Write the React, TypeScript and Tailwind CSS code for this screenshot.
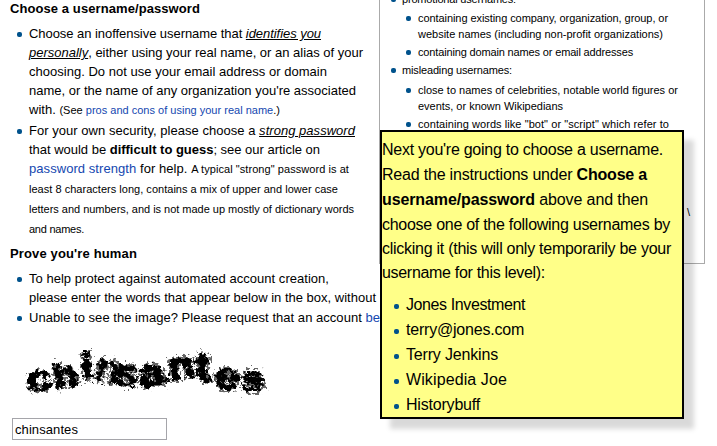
import { useLayoutEffect, useRef, useState, type ReactNode } from "react";

type LineProps = { width: number; className: string; children: ReactNode };

/* One line of text, tracked evenly so that it fills its measure. */
function Line({ width, className, children }: LineProps) {
  const ref = useRef<HTMLSpanElement>(null);
  const [spacing, setSpacing] = useState(0);
  useLayoutEffect(() => {
    const el = ref.current;
    if (!el) return;
    const count = (el.textContent ?? "").length;
    setSpacing((width - el.getBoundingClientRect().width) / count);
  }, [width]);
  return (
    <div className={`flex items-center whitespace-pre ${className}`}>
      <span ref={ref} style={{ letterSpacing: `${spacing}px` }}>
        {children}
      </span>
    </div>
  );
}

function Item({ dot, children }: { dot: string; children: ReactNode }) {
  return (
    <li className="flex items-start">
      <span className={`size-[5px] shrink-0 rounded-[2px] bg-[#00528c] ${dot}`} />
      <div>{children}</div>
    </li>
  );
}

const blue = "text-[#1447b0]";

const letters = [
  { c: "c", x: 28, y: 392, r: -6, s: 36, w: 1.25 },
  { c: "h", x: 56, y: 389, r: -12, s: 34, w: 1.15 },
  { c: "i", x: 82, y: 380, r: -3, s: 38, w: 1.1 },
  { c: "n", x: 94, y: 379, r: 12, s: 39, w: 1.0 },
  { c: "s", x: 115, y: 384, r: 6, s: 36, w: 1.1 },
  { c: "a", x: 141, y: 388, r: -12, s: 37, w: 1.3 },
  { c: "n", x: 170, y: 380, r: -7, s: 38, w: 1.1 },
  { c: "t", x: 196, y: 382, r: -3, s: 42, w: 1.1 },
  { c: "e", x: 213, y: 387, r: 8, s: 37, w: 1.2 },
  { c: "s", x: 242, y: 392, r: -5, s: 37, w: 1.15 },
];

function CaptchaWord({ stroke }: { stroke: number }) {
  return (
    <>
      {letters.map((l, i) => (
        <text key={i} transform={`translate(${l.x} ${l.y}) rotate(${l.r}) scale(${l.w} 1)`} fontSize={l.s} strokeWidth={stroke}>
          {l.c}
        </text>
      ))}
    </>
  );
}

function Captcha() {
  return (
    <svg viewBox="20 340 260 62" className="block h-[62px] w-[260px] font-['Liberation_Sans',Arial,sans-serif] font-bold">
      <defs>
        <filter id="rough" x="-5%" y="-20%" width="110%" height="140%" colorInterpolationFilters="sRGB">
          <feTurbulence type="fractalNoise" baseFrequency="0.22" numOctaves="2" seed="4" result="noise" />
          <feDisplacementMap in="SourceGraphic" in2="noise" scale="12" xChannelSelector="R" yChannelSelector="G" />
          <feGaussianBlur stdDeviation="0.5" />
        </filter>
        <filter id="fringe" x="-5%" y="-20%" width="110%" height="140%" colorInterpolationFilters="sRGB">
          <feTurbulence type="fractalNoise" baseFrequency="0.3" numOctaves="2" seed="9" result="noise" />
          <feDisplacementMap in="SourceGraphic" in2="noise" scale="20" xChannelSelector="R" yChannelSelector="G" />
          <feGaussianBlur stdDeviation="0.6" />
        </filter>
      </defs>
      <g filter="url(#fringe)" className="fill-black stroke-black opacity-60">
        <CaptchaWord stroke={2} />
      </g>
      <g filter="url(#rough)" className="fill-black stroke-black">
        <CaptchaWord stroke={1.2} />
      </g>
    </svg>
  );
}

function Instructions() {
  return (
    <main className="w-[379px] shrink-0 pl-[10px] text-[13px]">
      <Line width={190} className="h-[17px] font-bold">Choose a username/password</Line>
      <ul className="mt-[7px] pl-[7px]">
        <Item dot="mt-[8px] mr-[7px]">
          <Line width={292} className="h-[19px]">Choose an inoffensive username that <i className="underline">identifies you</i></Line>
          <Line width={334} className="h-[19px]"><i className="underline">personally</i>, either using your real name, or an alias of your</Line>
          <Line width={298} className="h-[19px]">choosing. Do not use your email address or domain</Line>
          <Line width={327} className="h-[19px]">name, or the name of any organization you're associated</Line>
          <Line width={251} className="h-[19px]">with. <span className="text-[11px]">(See <span className={blue}>pros and cons of using your real name</span>.)</span></Line>
        </Item>
        <Item dot="mt-[10px] mr-[7px]">
          <Line width={326} className="mt-[2px] h-[19px]">For your own security, please choose a <i className="underline">strong password</i></Line>
          <Line width={291} className="h-[19px]">that would be <b>difficult to guess</b>; see our article on</Line>
          <Line width={320} className="h-[19px]"><span className={blue}>password strength</span> for help. <span className="text-[11px]">A typical "strong" password is at</span></Line>
          <Line width={309} className="mt-px h-[20px] text-[11px]">least 8 characters long, contains a mix of upper and lower case</Line>
          <Line width={325} className="h-[20px] text-[11px]">letters and numbers, and is not made up mostly of dictionary words</Line>
          <Line width={55} className="h-[20px] text-[11px]">and names.</Line>
        </Item>
      </ul>
      <Line width={127} className="mt-[5px] h-[19px] font-bold">Prove you're human</Line>
      <ul className="mt-[6px] pl-[7px]">
        <Item dot="mt-[8px] mr-[7px]">
          <Line width={300} className="h-[19px]">To help protect against automated account creation,</Line>
          <Line width={347} className="h-[19px]">please enter the words that appear below in the box, without</Line>
        </Item>
        <Item dot="mt-[9px] mr-[7px]">
          <Line width={351} className="mt-px h-[19px]">Unable to see the image? Please request that an account <span className={blue}>be</span></Line>
        </Item>
      </ul>
      <div className="mt-[13px] ml-[10px]"><Captcha /></div>
      <div className="mt-[16px] ml-[2px] h-[22px] w-[155px] border border-[#a5a5aa] pl-[2px]">
        <Line width={63} className="h-[20px]">chinsantes</Line>
      </div>
    </main>
  );
}

function Guidelines() {
  return (
    <aside className="h-[264px] w-[326px] shrink-0 overflow-hidden border-x border-b border-[#aaa] pl-[11px] text-[11px]">
      <ul className="-mt-[9px]">
        <Item dot="mt-[6px] mr-[6px]">
          <Line width={114} className="h-[16px]">promotional usernames:</Line>
          <ul className="mt-[3px] pl-[4px]">
            <Item dot="mt-[6px] mr-[7px]">
              <Line width={250} className="h-[16px]">containing existing company, organization, group, or</Line>
              <Line width={245} className="h-[16px]">website names (including non-profit organizations)</Line>
            </Item>
            <Item dot="mt-[8px] mr-[7px]">
              <Line width={215} className="mt-[2px] h-[16px]">containing domain names or email addresses</Line>
            </Item>
          </ul>
        </Item>
        <Item dot="mt-[8px] mr-[6px]">
          <Line width={110} className="mt-[2px] h-[16px]">misleading usernames:</Line>
          <ul className="mt-[4px] pl-[4px]">
            <Item dot="mt-[6px] mr-[7px]">
              <Line width={260} className="h-[16px]">close to names of celebrities, notable world figures or</Line>
              <Line width={145} className="h-[16px]">events, or known Wikipedians</Line>
            </Item>
            <Item dot="mt-[8px] mr-[7px]">
              <Line width={251} className="mt-[2px] h-[16px]">containing words like "bot" or "script" which refer to</Line>
            </Item>
          </ul>
        </Item>
      </ul>
      <div className="mt-[75px] ml-[296px] text-[11px]">\</div>
    </aside>
  );
}

const names: [string, number][] = [
  ["Jones Investment", 119],
  ["terry@jones.com", 118],
  ["Terry Jenkins", 92],
  ["Wikipedia Joe", 101],
  ["Historybuff", 74],
];

function Tutorial() {
  return (
    <section className="absolute top-[130px] left-[380px] h-[289px] w-[304px] border-2 border-black bg-[#ffff88] pt-[6px] text-[16px] shadow-[10px_10px_5px_rgba(0,0,0,0.15)]">
      <Line width={281} className="h-[24px]">Next you're going to choose a username.</Line>
      <Line width={265} className="h-[25px]">Read the instructions under <b>Choose a</b></Line>
      <Line width={266} className="h-[25px]"><b>username/password</b> above and then</Line>
      <Line width={288} className="h-[25px]">choose one of the following usernames by</Line>
      <Line width={289} className="h-[24px]">clicking it (this will only temporarily be your</Line>
      <Line width={163} className="h-[24px]">username for this level):</Line>
      <ul className="mt-[7px] pl-[12px]">
        {names.map(([name, width]) => (
          <Item key={name} dot="mt-[12px] mr-[7px]">
            <Line width={width} className="h-[25px]">{name}</Line>
          </Item>
        ))}
      </ul>
    </section>
  );
}

export default function App() {
  return (
    <div className="relative flex h-[446px] w-[717px] items-start overflow-hidden bg-white font-['Liberation_Sans',Arial,sans-serif] leading-none text-black">
      <Instructions />
      <Guidelines />
      <Tutorial />
    </div>
  );
}
